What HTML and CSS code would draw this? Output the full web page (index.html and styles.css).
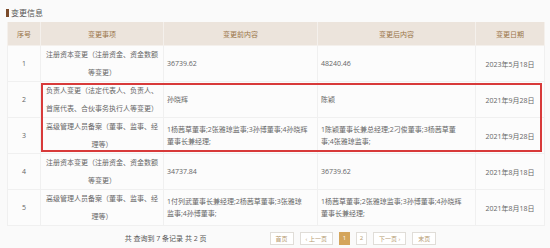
FILE: index.html
```html
<!DOCTYPE html>
<html lang="zh-CN">
<head>
<meta charset="utf-8">
<title>变更信息</title>
<link rel="stylesheet" href="styles.css">
</head>
<body>
<div class="page">
  <div class="title"><span class="bar"></span>变更信息</div>
  <div class="table-wrap">
    <table class="changes">
      <colgroup>
        <col class="c-seq"><col class="c-item"><col class="c-before"><col class="c-after"><col class="c-date">
      </colgroup>
      <thead>
        <tr><th>序号</th><th>变更事项</th><th>变更前内容</th><th>变更后内容</th><th>变更日期</th></tr>
      </thead>
      <tbody>
        <tr>
          <td class="seq">1</td>
          <td class="item">注册资本变更（注册资金、资金数额等变更）</td>
          <td class="txt">36739.62</td>
          <td class="txt after">48240.46</td>
          <td class="date">2023年5月18日</td>
        </tr>
        <tr>
          <td class="seq">2</td>
          <td class="item">负责人变更（法定代表人、负责人、首席代表、合伙事务执行人等变更）</td>
          <td class="txt">孙晓辉</td>
          <td class="txt after">陈颖</td>
          <td class="date">2021年9月28日</td>
        </tr>
        <tr>
          <td class="seq">3</td>
          <td class="item">高级管理人员备案（董事、监事、经理等）</td>
          <td class="txt">1杨茜草董事;2张雅琼监事;3孙博董事;4孙晓辉董事长兼经理;</td>
          <td class="txt after">1陈颖董事长兼总经理;2刁俊董事;3杨茜草董事;4张雅琼监事;</td>
          <td class="date">2021年9月28日</td>
        </tr>
        <tr>
          <td class="seq">4</td>
          <td class="item">注册资本变更（注册资金、资金数额等变更）</td>
          <td class="txt">34737.84</td>
          <td class="txt after">36739.62</td>
          <td class="date">2021年8月18日</td>
        </tr>
        <tr>
          <td class="seq">5</td>
          <td class="item">高级管理人员备案（董事、监事、经理等）</td>
          <td class="txt">1付列武董事长兼经理;2杨茜草董事;3张雅琼监事;4孙博董事;</td>
          <td class="txt after">1杨茜草董事;2张雅琼监事;3孙博董事;4孙晓辉董事长兼经理;</td>
          <td class="date">2021年8月18日</td>
        </tr>
      </tbody>
    </table>
    <div class="highlight"></div>
  </div>
  <div class="pager">
    <span class="summary">共 查询到 7 条记录 共 2 页</span>
    <div class="buttons">
      <span class="btn">首页</span>
      <span class="btn">‹ 上一页</span>
      <span class="btn num active">1</span>
      <span class="btn num">2</span>
      <span class="btn">下一页 ›</span>
      <span class="btn">末页</span>
    </div>
  </div>
</div>
</body>
</html>
```

FILE: styles.css
```css
html, body {
  margin: 0;
  padding: 0;
  background: #fafafa;
}

body {
  font-family: "Open Sans", "Noto Sans CJK SC", sans-serif;
  color: #666;
  font-size: 7px;
}

.page {
  width: 550px;
  height: 248px;
  padding: 7px 6px 0 7px;
  box-sizing: border-box;
}

.title {
  display: flex;
  align-items: center;
  gap: 2px;
  height: 11px;
  font-size: 8px;
  color: #555;
  margin-left: -1px;
  margin-bottom: 4px;
}

.bar {
  width: 3px;
  height: 8px;
  background: #7a4a2a;
}

.table-wrap {
  position: relative;
}

.changes {
  width: 537px;
  table-layout: fixed;
  border-collapse: collapse;
  background: #fcfcfc;
}

.c-seq { width: 33px; }
.c-item { width: 123px; }
.c-before { width: 154px; }
.c-after { width: 158px; }
.c-date { width: 69px; }

.changes th {
  height: 23px;
  padding: 0;
  background: #ece4dc;
  color: #9a7548;
  font-weight: normal;
  font-size: 7px;
  border: 1px solid #f4f0ec;
  border-top: none;
}

.changes td {
  height: 35px;
  padding: 0;
  border: 1px solid #f0f0f0;
  vertical-align: middle;
  box-sizing: border-box;
}

.changes .seq {
  text-align: center;
}

.changes .item {
  text-align: center;
  line-height: 17.5px;
  padding: 0 3px;
}

.changes .txt {
  line-height: 12px;
  padding: 0 9px 0 3px;
}

.changes .txt.after {
  padding-right: 7px;
}

.changes .date {
  text-align: center;
}

.highlight {
  position: absolute;
  left: 34px;
  top: 61px;
  width: 501px;
  height: 69px;
  border: 2px solid #d83a3a;
  box-sizing: border-box;
}

.pager {
  display: flex;
  justify-content: center;
  align-items: center;
  height: 24px;
  padding-left: 10px;
}

.summary {
  margin-right: 63px;
  color: #555;
}

.buttons {
  display: flex;
  gap: 6px;
}

.btn {
  height: 13px;
  padding: 0 5px;
  box-sizing: border-box;
  border: 1px solid #e0ddd8;
  background: #fff;
  color: #b59a70;
  font-size: 6px;
  display: flex;
  align-items: center;
  justify-content: center;
}

.btn.num {
  width: 11px;
  padding: 0;
}

.btn.active {
  background: #d4a55c;
  border-color: #d4a55c;
  color: #fff;
}
```
